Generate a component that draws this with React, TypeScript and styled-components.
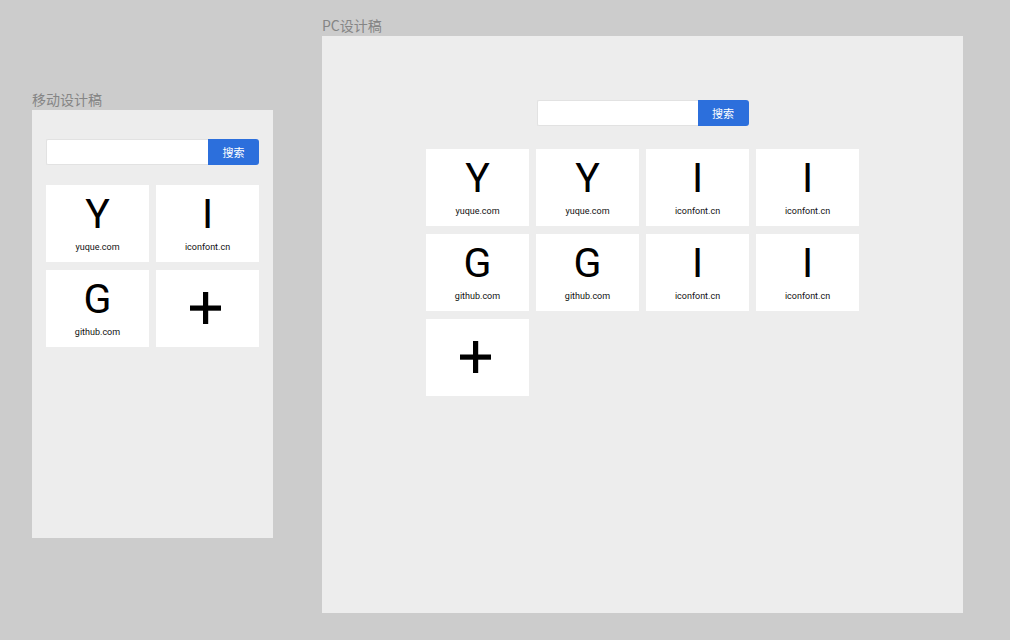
import React from "react";
import styled, { createGlobalStyle } from "styled-components";

const Global = createGlobalStyle`
  html, body { margin: 0; padding: 0; background: #cccccc; }
  * { box-sizing: border-box; }
`;

const Canvas = styled.div`
  position: relative;
  width: 1010px;
  height: 640px;
  overflow: hidden;
  background: #cccccc;
  font-family: Roboto, "Noto Sans CJK SC", sans-serif;
`;

const Artboard = styled.section<{ $x: number; $y: number }>`
  position: absolute;
  left: ${(p) => p.$x}px;
  top: ${(p) => p.$y}px;
  display: flex;
  flex-direction: column;
`;

const BoardLabel = styled.div`
  font-family: "Noto Sans CJK SC", sans-serif;
  font-size: 14px;
  line-height: 14px;
  color: #858585;
  margin-bottom: 4px;
  white-space: nowrap;
`;

const Frame = styled.div<{ $w: number; $h: number; $pt: number; $gap: number }>`
  width: ${(p) => p.$w}px;
  height: ${(p) => p.$h}px;
  background: #ededed;
  padding-top: ${(p) => p.$pt}px;
  display: flex;
  flex-direction: column;
  align-items: center;
  gap: ${(p) => p.$gap}px;
`;

const SearchBar = styled.div<{ $w: number }>`
  width: ${(p) => p.$w}px;
  height: 26px;
  display: flex;
`;

const SearchInput = styled.div`
  flex: 1;
  height: 100%;
  background: #ffffff;
  border: 1px solid #e2e2e2;
  border-right: none;
  border-radius: 2px 0 0 2px;
`;

const SearchButton = styled.div`
  width: 51px;
  height: 100%;
  background: #2c6fdc;
  border-radius: 0 3px 3px 0;
  color: #ffffff;
  font-family: "Noto Sans CJK SC", sans-serif;
  font-size: 11px;
  display: flex;
  align-items: center;
  justify-content: center;
`;

const Grid = styled.div<{ $cols: number }>`
  display: grid;
  grid-template-columns: repeat(${(p) => p.$cols}, 103px);
  grid-auto-rows: 77px;
  column-gap: 7px;
  row-gap: 8px;
`;

const Card = styled.div<{ $add?: boolean }>`
  background: #ffffff;
  display: flex;
  flex-direction: column;
  align-items: center;
  justify-content: ${(p) => (p.$add ? "center" : "flex-start")};
  padding-top: ${(p) => (p.$add ? 0 : 9)}px;
`;

const Letter = styled.div`
  font-family: Roboto, sans-serif;
  font-size: 41px;
  line-height: 41px;
  color: #000000;
`;

const Site = styled.div`
  margin-top: 7px;
  font-family: Roboto, sans-serif;
  font-size: 9px;
  line-height: 11px;
  color: #111111;
`;

const PlusIcon = styled.svg`
  width: 31px;
  height: 32px;
  margin-right: 4px;
  margin-bottom: 1px;
`;

type Site = { letter: string; url: string };

const Plus = () => (
  <PlusIcon viewBox="0 0 31 32">
    <rect x="13" y="0" width="5.2" height="32" fill="#000" />
    <rect x="0" y="13.5" width="31" height="5.2" fill="#000" />
  </PlusIcon>
);

const SiteCard = ({ s }: { s: Site }) => (
  <Card>
    <Letter>{s.letter}</Letter>
    <Site>{s.url}</Site>
  </Card>
);

const mobileSites: Site[] = [
  { letter: "Y", url: "yuque.com" },
  { letter: "I", url: "iconfont.cn" },
  { letter: "G", url: "github.com" },
];

const pcSites: Site[] = [
  { letter: "Y", url: "yuque.com" },
  { letter: "Y", url: "yuque.com" },
  { letter: "I", url: "iconfont.cn" },
  { letter: "I", url: "iconfont.cn" },
  { letter: "G", url: "github.com" },
  { letter: "G", url: "github.com" },
  { letter: "I", url: "iconfont.cn" },
  { letter: "I", url: "iconfont.cn" },
];

export default function App() {
  return (
    <Canvas>
      <Global />
      <Artboard $x={32} $y={92}>
        <BoardLabel>移动设计稿</BoardLabel>
        <Frame $w={241} $h={428} $pt={29} $gap={20}>
          <SearchBar $w={213}>
            <SearchInput />
            <SearchButton>搜索</SearchButton>
          </SearchBar>
          <Grid $cols={2}>
            {mobileSites.map((s, i) => (
              <SiteCard key={i} s={s} />
            ))}
            <Card $add>
              <Plus />
            </Card>
          </Grid>
        </Frame>
      </Artboard>
      <Artboard $x={322} $y={18}>
        <BoardLabel>PC设计稿</BoardLabel>
        <Frame $w={641} $h={577} $pt={64} $gap={23}>
          <SearchBar $w={212}>
            <SearchInput />
            <SearchButton>搜索</SearchButton>
          </SearchBar>
          <Grid $cols={4}>
            {pcSites.map((s, i) => (
              <SiteCard key={i} s={s} />
            ))}
            <Card $add>
              <Plus />
            </Card>
          </Grid>
        </Frame>
      </Artboard>
    </Canvas>
  );
}
